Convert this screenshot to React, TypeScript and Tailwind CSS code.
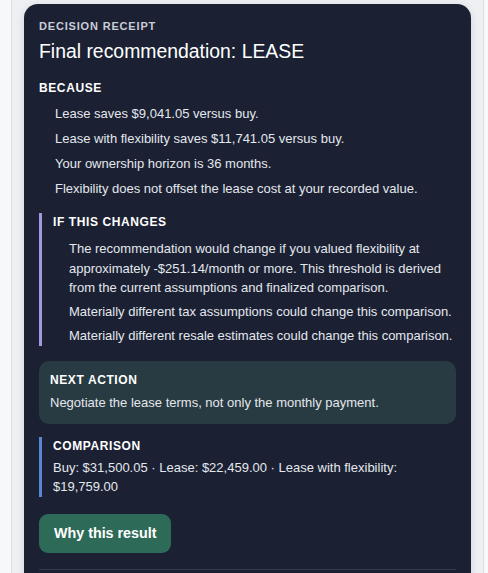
import React from "react";

type Receipt = {
  recommendation: string;
  reasons: string[];
  threshold: string;
  risks: string[];
  nextAction: string;
  comparison: string[];
};

const receipt: Receipt = {
  recommendation: "LEASE",
  reasons: [
    "Lease saves $9,041.05 versus buy.",
    "Lease with flexibility saves $11,741.05 versus buy.",
    "Your ownership horizon is 36 months.",
    "Flexibility does not offset the lease cost at your recorded value.",
  ],
  threshold:
    "The recommendation would change if you valued flexibility at approximately -$251.14/month or more. This threshold is derived from the current assumptions and finalized comparison.",
  risks: [
    "Materially different tax assumptions could change this comparison.",
    "Materially different resale estimates could change this comparison.",
  ],
  nextAction: "Negotiate the lease terms, not only the monthly payment.",
  comparison: [
    "Buy: $31,500.05",
    "Lease: $22,459.00",
    "Lease with flexibility: $19,759.00",
  ],
};

const SectionTitle = ({ children }: { children: React.ReactNode }) => (
  <h3 className="text-[12px] leading-[18px] font-bold tracking-[0.05em] uppercase text-white">
    {children}
  </h3>
);

export default function App() {
  return (
    <div
      className="h-[573px] bg-[#f7f8fa] overflow-hidden"
      style={{ fontFamily: '"Liberation Sans", Arial, sans-serif' }}
    >
      <div className="ml-[11px] mr-[4px] min-h-[573px] border-x border-[#d3e2de] bg-[#eef0f3] px-[12px] pt-[4px]">
        <div className="rounded-[14px] bg-[#1b2133] px-[15px] pt-[14px] pb-[20px] shadow-[0_2px_10px_rgba(0,0,0,0.12)]">
          <div className="text-[11px] leading-[16px] font-bold tracking-[0.075em] text-[#c9cdd8]">
            DECISION RECEIPT
          </div>
          <h1 className="mt-[3px] text-[19.4px] leading-[28px] text-white">
            Final recommendation: {receipt.recommendation}
          </h1>

          <div className="mt-[14px]">
            <SectionTitle>Because</SectionTitle>
            <ul className="mt-[7px] pl-[16px]">
              {receipt.reasons.map((r) => (
                <li key={r} className="mt-[5px] text-[13px] leading-[20px] text-[#e4e7ed]">
                  {r}
                </li>
              ))}
            </ul>
          </div>

          <div className="mt-[14px] border-l-[3px] border-[#a29ae0] pl-[11px]">
            <SectionTitle>If this changes</SectionTitle>
            <div className="mt-[8px] pl-[16px] text-[13px] leading-[19.6px] text-[#e4e7ed]">
              <p>{receipt.threshold}</p>
              {receipt.risks.map((r) => (
                <p key={r} className="mt-[4px] leading-[20px]">
                  {r}
                </p>
              ))}
            </div>
          </div>

          <div className="mt-[15px] rounded-[10px] bg-[#283b42] px-[11px] pt-[10px] pb-[11px]">
            <SectionTitle>Next action</SectionTitle>
            <p className="mt-[4px] text-[13px] leading-[20px] text-[#e4e7ed]">
              {receipt.nextAction}
            </p>
          </div>

          <div className="mt-[13px] border-l-[3px] border-[#5b86d8] pl-[11px]">
            <SectionTitle>Comparison</SectionTitle>
            <p className="mt-[3px] text-[13px] leading-[19.5px] text-[#e4e7ed]">
              {receipt.comparison.join(" · ")}
            </p>
          </div>

          <button className="mt-[17px] h-[39px] rounded-[9px] bg-[#2e6a58] px-[15px] text-[14.3px] font-bold text-white">
            Why this result
          </button>

          <div className="mt-[16px] border-t border-[#353c4d]" />
        </div>
      </div>
    </div>
  );
}
